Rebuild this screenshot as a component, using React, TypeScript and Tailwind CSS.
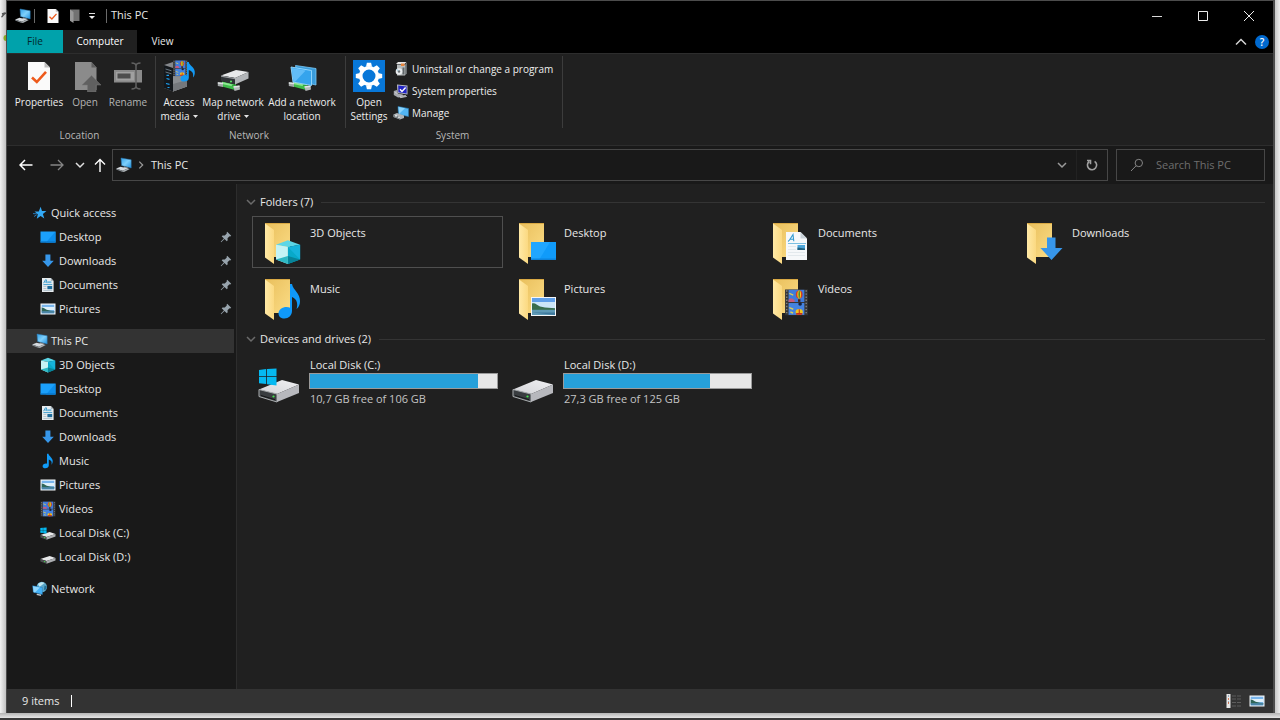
import React from "react";

type IconProps = { className?: string };

/* ---------- small icons (16 x 16 grid) ---------- */

function PcIcon({ className = "h-4 w-4" }: IconProps) {
  return (
    <svg viewBox="0 0 16 16" className={className} aria-hidden="true">
      <defs>
        <linearGradient id="pc" x1="0" y1="0" x2="1" y2="1">
          <stop offset="0" stopColor="#2f9fe8" />
          <stop offset=".5" stopColor="#7fd0fb" />
          <stop offset="1" stopColor="#1d8fe0" />
        </linearGradient>
      </defs>
      <path d="M5 1 15.200 2.800v8.200L5.600 8.600z" fill="url(#pc)" stroke="#2a75ad" strokeWidth=".5" />
      <path d="M8 9.600l4 1-.5 1.400-4-1z" fill="#8e9396" />
      <path d="M.2 11.500 4.600 9.800l7.400 1.800L6.500 13.800z" fill="#d5dade" />
      <path d="M.2 11.500 6.500 13.800v1.200L.2 12.500z" fill="#848b90" />
      <path d="M6.500 13.800 12 11.600l1.800.5L8.500 14.800l-2 .2z" fill="#aab0b4" />
    </svg>
  );
}

function StarIcon({ className = "h-4 w-4" }: IconProps) {
  return (
    <svg viewBox="0 0 16 16" className={className} aria-hidden="true">
      <path
        d="M8.600 1.800 10 6l4.400.1-3.500 2.800 1.400 4.600-3.700-2.500-3.800 2.700 1-4.500L2.500 6.600l4.300-.2z"
        fill="#33a9f4"
      />
      <path d="M1 8.600l4 .2M2 11.500l2.600-1.600" stroke="#2677b5" strokeWidth="1" />
    </svg>
  );
}

function DesktopIcon({ className = "h-4 w-4" }: IconProps) {
  return (
    <svg viewBox="0 0 16 16" className={className} aria-hidden="true">
      <rect x=".5" y="2.500" width="15" height="11" fill="#1ba0fb" />
      <path d="M15.500 2.500v11H6z" fill="#0c8deb" />
      <rect x=".5" y="12.300" width="15" height="1.200" fill="#0877cb" />
    </svg>
  );
}

function DownIcon({ className = "h-4 w-4" }: IconProps) {
  return (
    <svg viewBox="0 0 16 16" className={className} aria-hidden="true">
      <path d="M5.400 1.500h5v6.300h3.400L8 14 2.200 7.800h3.200z" fill="#3797ea" />
    </svg>
  );
}

function DocIcon({ className = "h-4 w-4" }: IconProps) {
  return (
    <svg viewBox="0 0 16 16" className={className} aria-hidden="true">
      <path d="M2 1h8.800L13.600 4v11H2z" fill="#e6ebee" />
      <path d="M10.800 1 13.600 4h-2.800z" fill="#aab7c0" />
      <path d="M3.600 6.200 5.400 2.800h1l.6 3.400M4.600 5h2" stroke="#3096cc" fill="none" strokeWidth=".9" />
      <path d="M3.400 7.600h8.800" stroke="#3096cc" strokeWidth=".9" />
      <rect x="7.400" y="4.300" width="4" height="1.800" fill="#6db7dd" />
      <rect x="7.400" y="9" width="4.800" height="3.200" fill="#1e6c9c" />
      <path d="M3.400 9.500h3M3.400 11.500h3M3.400 13.500h8.800" stroke="#a9bcc8" strokeWidth=".8" />
    </svg>
  );
}

function PictureIcon({ className = "h-4 w-4" }: IconProps) {
  return (
    <svg viewBox="0 0 16 16" className={className} aria-hidden="true">
      <rect x=".5" y="2.500" width="15" height="11" fill="#f4f7f9" />
      <rect x="1.700" y="3.700" width="12.600" height="8.600" fill="#79b5ec" />
      <path d="M1.700 6h12.600v3H1.700z" fill="#dff0fa" />
      <path d="M1.700 6.600c2 0 3 1.400 5 2.200l4 .9 3.600.3v.7H1.700z" fill="#2f6658" />
      <rect x="1.700" y="10.300" width="12.600" height="2" fill="#4a86a8" />
    </svg>
  );
}

function PinIcon() {
  return (
    <svg viewBox="0 0 12 12" className="h-3 w-3 shrink-0" aria-hidden="true">
      <path
        d="M7.200.8 11.200 4.800l-1 .6-.7-.2-2 2 .2 2.100-.9.9L4.500 8 1.200 11.200.7 10.800 3.900 7.500 1.700 5.300l.9-.9 2.200.2 2-2-.2-.9z"
        fill="#98a4ad"
      />
    </svg>
  );
}

function CubeShape() {
  return (
    <>
      <path d="M1 3.600 8 .8l7.200 2.800L8 5z" fill="#5cd6e6" />
      <path d="M1 3.600 8 5v10.400l-7-2.800z" fill="#c4f3f5" />
      <path d="M8 5l7.200-1.400v9L8 15.400z" fill="#08a9c9" />
      <path d="M8 10.500l7.200 2.100L8 15.400z" fill="#078499" />
      <path d="M1 12.600 8 10.500v4.900z" fill="#2eb9c4" />
      <path d="M8 5l7.200-1.400v9z" fill="#1bb8e2" opacity=".7" />
    </>
  );
}

function CubeIcon({ className = "h-4 w-4" }: IconProps) {
  return (
    <svg viewBox="0 0 16 16" className={className} aria-hidden="true">
      <CubeShape />
    </svg>
  );
}

function NoteIcon({ className = "h-4 w-4" }: IconProps) {
  return (
    <svg viewBox="0 0 16 16" className={className} aria-hidden="true">
      <path
        d="M7 .8h1.500c.2 2.600 4.800 4 4.200 8-.2 1.400-.7 2.300-1.200 2.900.5-2.600.2-4.200-2.700-5.300v6.200c0 1.600-1.500 2.700-3.400 2.700-1.600 0-2.800-.8-2.800-2.100 0-1.600 1.600-2.700 3.300-2.700.5 0 .8.100 1.100.2z"
        fill="#109bf8"
      />
    </svg>
  );
}

function FilmShape() {
  return (
    <>
      <rect x=".5" y=".5" width="15" height="15" fill="#353535" />
      <path d="M1.600 1v14M14.400 1v14" stroke="#858585" strokeWidth=".9" strokeDasharray=".8 1" />
      <rect x="2.800" y=".7" width="10.400" height="7.100" fill="#3f7bdc" />
      <rect x="2.800" y="8.400" width="10.400" height="6.900" fill="#4583e0" />
      <path d="M2.800 6.600c1.200-1.300 2.600-1 4 .2v1H2.800z" fill="#c65a7c" />
      <path d="M3.300 2.800l2.600 1M3.300 11l2.600 1M4 13.600l1.800.6" stroke="#d9cf5a" strokeWidth=".8" />
      <ellipse cx="9.800" cy="3.500" rx="2.200" ry="2.400" fill="#d33a26" />
      <ellipse cx="9.800" cy="3.500" rx="1.200" ry="2.400" fill="#f2cf20" />
      <ellipse cx="9.800" cy="3.500" rx=".4" ry="2.400" fill="#1f7a3a" />
      <path d="M9 6.200h1.600v1.500H9z" fill="#4a2416" />
      <ellipse cx="10.400" cy="9" rx="1.200" ry=".9" fill="#14223f" />
      <ellipse cx="9.800" cy="13.600" rx="2.400" ry="1.700" fill="#f1c51b" />
      <path d="M7.800 14.200h4v1h-4z" fill="#c42c22" />
      <path d="M9.500 12h.7v3h-.7z" fill="#c42c22" />
    </>
  );
}

function FilmIcon({ className = "h-4 w-4" }: IconProps) {
  return (
    <svg viewBox="0 0 16 16" className={className} aria-hidden="true">
      <FilmShape />
    </svg>
  );
}

function WinLogo({ x, y, s }: { x: number; y: number; s: number }) {
  return (
    <g transform={`translate(${x} ${y}) scale(${s})`} fill="#05b9f1">
      <path d="M0 1.500 7.200.6v7.100H0zM8 .5 17.500 0v7.700H8zM0 8.500h7.200v7.100L0 14.800zM8 8.500h9.500v8.500L8 15.800z" />
    </g>
  );
}

function SmallDriveIcon({ windows = false }: { windows?: boolean }) {
  return (
    <svg viewBox="0 0 16 16" className="h-4 w-4" aria-hidden="true">
      <path d="M.4 10 9.600 7l5.900 2L6.500 12z" fill="#e8e9ea" />
      <path d="M.4 10 6.500 12v2.800L.4 12.600z" fill="#4b4e50" />
      <path d="M6.500 12l9-3v2.500l-9 3.300z" fill="#abadb0" />
      <circle cx="4.600" cy="12.600" r=".7" fill="#41dd4a" />
      {windows && <WinLogo x={0.3} y={2.5} s={0.36} />}
    </svg>
  );
}

function NetworkIcon() {
  return (
    <svg viewBox="0 0 16 16" className="h-4 w-4" aria-hidden="true">
      <circle cx="9.800" cy="6" r="5.200" fill="#5aa7c8" />
      <path d="M6 3c2-2 5-2.400 6.500-1L10 4 7.500 6z" fill="#c2e8f2" />
      <path d="M12.500 4.500l2.400 1-1 3-2 .5z" fill="#256f94" />
      <path d="M.6 4.800 10.400 6.500v7L1.400 11.200z" fill="#43b1f7" stroke="#2b7bb4" strokeWidth=".5" />
      <path d="M1 5.200l7 1.200L3 11.400l-1.400-.5z" fill="#8ed6fd" />
      <path d="M5 12.800l4 .8v1.300l-4.500-.9z" fill="#bfc5ca" />
    </svg>
  );
}

/* ---------- title bar icons ---------- */

function SheetCheckIcon({ className }: IconProps) {
  return (
    <svg viewBox="0 0 22 28" className={className} aria-hidden="true">
      <path d="M0 0h16.500L22 5.500V28H0z" fill="#fafafa" />
      <path d="M16.500 0 22 5.500h-5.500z" fill="#bdbdbd" />
      <path d="M4 15.500 8.800 20 18 9.800" fill="none" stroke="#ee5a1b" strokeWidth="2.600" />
    </svg>
  );
}

/* ---------- ribbon icons ---------- */

function OpenIcon() {
  return (
    <svg viewBox="0 0 32 32" className="h-8 w-8" aria-hidden="true">
      <path d="M6 2h16.500L27.500 7.500V30H6z" fill="#8b8b8b" />
      <path d="M22.500 2 27.500 7.500h-5z" fill="#5e5e5e" />
      <path d="M22.500 15.500 32 25h-5v7h-8.500v-7H13z" fill="#606060" stroke="#777" strokeWidth=".5" />
    </svg>
  );
}

function RenameIcon() {
  return (
    <svg viewBox="0 0 32 32" className="h-8 w-8" aria-hidden="true">
      <rect x="2" y="10" width="28" height="12.500" fill="#8a8a8a" />
      <rect x="4" y="12" width="18" height="8.500" fill="#a0a0a0" />
      <rect x="5.500" y="13.500" width="13" height="5" fill="#4d4d4d" />
      <path
        d="M19.500 3c3 0 4.500.8 4.500 3v20c0 2.200-1.500 3-4.500 3M28.500 3c-3 0-4.500.8-4.500 3M28.500 29c-3 0-4.500-.8-4.500-3"
        fill="none"
        stroke="#606060"
        strokeWidth="1.500"
      />
    </svg>
  );
}

function AccessMediaIcon() {
  return (
    <svg viewBox="0 0 34 32" className="h-8 w-[34px]" aria-hidden="true">
      <path d="M2 5 11 2l14 3v21.500L11 31.500 2 28z" fill="#85888c" />
      <path d="M2 5l9 3v23.500L2 28z" fill="#14181c" />
      <path d="M11 8l14-3v21.500l-14 5z" fill="#8b8e92" />
      <path d="M11 24l14-4v6.500l-14 5z" fill="#75787c" />
      <path d="M3.500 9l6 1.800M3.500 12l6 1.800" stroke="#6b7780" strokeWidth="1" />
      <path d="M4.500 15.300h2.500M4.500 18.500l3 .8M4 23.500l3.500.8M5.500 27.500h2" stroke="#1c9ff0" strokeWidth="1.200" />
      <g transform="translate(10.500 -.2) scale(.98 1.050)">
        <FilmShape />
      </g>
      <path
        d="M25 2h1.800c.5 4 6.700 5 6 11.500-.3 2-.9 3.200-1.800 4 .6-4-.2-6-4.200-7.500v8c0 2.400-2.200 3.600-4.600 3.600-2.300 0-3.700-1-3.700-2.900 0-2.300 2.200-3.700 4.600-3.700.8 0 1.400.1 1.900.4z"
        fill="#139af5"
      />
    </svg>
  );
}

function PipeShape() {
  return (
    <>
      <path d="M5 21.500l13 3v5.500L5 26.500z" fill="#3fbd4b" />
      <path d="M5 22l13 3v1.800L5 24z" fill="#8fe693" />
      <path d="M14.500 25l4-1.500 1.500 4-2 2.500z" fill="#31a83c" />
      <path d="M.8 22.300l5.200.4v4.200l-5.200-.8z" fill="#a3a8a9" />
      <path d="M.8 22.300l5.200.4v1.600l-5.200-.6z" fill="#dde1e1" />
      <path d="M16.500 26.300l6-.8.5 4-5.500 1.500z" fill="#b5babb" />
      <path d="M16.500 26.300l6-.8v1.400l-6 .9z" fill="#e1e4e4" />
    </>
  );
}

function MapDriveIcon() {
  return (
    <svg viewBox="0 0 32 32" className="h-8 w-8" aria-hidden="true">
      <PipeShape />
      <path d="M4 15.500 19 10l12.500 2L18 18z" fill="#e8e9ea" />
      <path d="M4 15.500 18 18v6.500L4 20.800z" fill="#303437" />
      <path d="M4 15.500 18 18v1.300L4 16.800z" fill="#9a9da0" />
      <path d="M18 18l13.500-6v6.500l-13.500 6z" fill="#b2b5b8" />
      <circle cx="14" cy="21.500" r="1" fill="#5ff268" />
    </svg>
  );
}

function NetLocationIcon() {
  return (
    <svg viewBox="0 0 32 32" className="h-8 w-8" aria-hidden="true">
      <path d="M9.500 5.500l20.500 3V25L12 21z" fill="#3a9cdb" stroke="#79c8f6" strokeWidth=".8" />
      <g transform="translate(2 0)">
        <PipeShape />
      </g>
      <path d="M5 7l20.500 3.500V25.500L7 22z" fill="#35a4ed" stroke="#98daff" strokeWidth=".9" />
      <path d="M5.700 7.900l14 2.500L9 21.800l-1.500-.3z" fill="#62bdf8" />
    </svg>
  );
}

const TEETH = [0, 45, 90, 135, 180, 225, 270, 315];

function SettingsIcon() {
  return (
    <svg viewBox="0 0 32 32" className="h-8 w-8" aria-hidden="true">
      <rect width="32" height="32" fill="#0877d8" />
      <circle cx="16" cy="16" r="8.300" fill="none" stroke="#fff" strokeWidth="3.600" />
      {TEETH.map((angle) => (
        <path key={angle} d="M13.900 2.800h4.200l.9 4h-6z" fill="#fff" transform={`rotate(${angle} 16 16)`} />
      ))}
    </svg>
  );
}

function UninstallIcon() {
  return (
    <svg viewBox="0 0 16 16" className="h-4 w-4" aria-hidden="true">
      <path d="M4 3.500h8v11H4z" fill="#b8bcbd" />
      <path d="M3 3 5 1h8.500l-2 2z" fill="#e4e4e4" />
      <path d="M12 3.500l1.800-2v11l-1.800 2z" fill="#7c8183" />
      <path d="M8 2.500h3.500v2.500H8z" fill="#e8843a" />
      <path d="M9.500 6.500h2v7h-2z" fill="#606668" />
      <circle cx="6" cy="10.500" r="3.300" fill="#e9ecee" />
      <circle cx="6" cy="10.500" r="1.200" fill="#6d7375" />
      <path d="M3.500 8.500l2 1.200" stroke="#90c4d8" strokeWidth="1" />
    </svg>
  );
}

function SystemPropsIcon() {
  return (
    <svg viewBox="0 0 16 16" className="h-4 w-4" aria-hidden="true">
      <path d="M4 1.500 14.500 2.500v9L4.500 10z" fill="#b9bbc4" />
      <path d="M5.200 2.600l8.400.9v7l-8.200-1.300z" fill="#2224c4" />
      <path d="M7 6.300l2 2.200 3.600-4" stroke="#fff" strokeWidth="1.400" fill="none" />
      <path d="M.8 8l3.200-1 .8 3.600 5 1v2.400L5 14.500.8 12z" fill="#a5a8ae" />
      <path d="M2 9.500l2.500 1M7 13.300l5.500-.8 1 1-6 1.200z" stroke="#dcdde0" strokeWidth=".7" fill="#8f9298" />
    </svg>
  );
}

function ManageIcon() {
  return (
    <svg viewBox="0 0 16 16" className="h-4 w-4" aria-hidden="true">
      <path d="M5 1.500 15.500 3.500v8L5.500 9.500z" fill="#52b5f3" stroke="#2c78ad" strokeWidth=".6" />
      <path d="M5.500 2 12 3.200 6 9z" fill="#8ad3fb" />
      <path d="M.5 9.500 4 8l7 2.500V13l-4 1.500L.5 12z" fill="#aeb4b8" />
      <path d="M.5 9.500 7 12v2.500L.5 12z" fill="#7b8286" />
      <circle cx="3" cy="10.800" r="1" fill="#e4e7e9" />
      <circle cx="6" cy="12.300" r=".9" fill="#e4e7e9" />
    </svg>
  );
}

/* ---------- large tile icons (48 x 48 grid) ---------- */

function FolderIcon({ children }: { children: React.ReactNode }) {
  return (
    <svg viewBox="0 0 48 48" className="h-12 w-12 shrink-0" aria-hidden="true">
      <defs>
        <linearGradient id="fb" x1="0" y1="0" x2="1" y2="1">
          <stop offset="0" stopColor="#e9bf5c" />
          <stop offset="1" stopColor="#fbdc85" />
        </linearGradient>
        <linearGradient id="ff" x1="0" y1="0" x2="1" y2="0">
          <stop offset="0" stopColor="#ffe9a6" />
          <stop offset="1" stopColor="#fbd981" />
        </linearGradient>
      </defs>
      <path d="M7 6h25v34H7z" fill="url(#fb)" />
      <path d="M7 6h25v1H7z" fill="#d9a944" />
      <path d="M7 6.500 16 13v34l-9-6.500z" fill="url(#ff)" />
      {children}
    </svg>
  );
}

function LargeCube() {
  return (
    <g transform="translate(16.300 22) scale(1.700 1.620)">
      <CubeShape />
    </g>
  );
}

function LargeDesktop() {
  return (
    <>
      <rect x="19" y="25" width="25" height="18" fill="#109bfa" />
      <path d="M19 25h19L27 43h-8z" fill="#20a6ff" />
      <rect x="19" y="41.500" width="25" height="1.500" fill="#0c83dc" />
    </>
  );
}

function LargeDocument() {
  return (
    <g transform="translate(0 1)">
      <path d="M20 14h14.500L41 20.500V42H20z" fill="#f6f8fa" />
      <path d="M34.500 14 41 20.500h-6.500z" fill="#c9d2d9" />
      <path d="M22 23.500c2-1 3.500-5 5-7l.8 6.800M23.500 21.300h4.500" stroke="#349bcf" strokeWidth="1.100" fill="none" />
      <path d="M22 25.500h18" stroke="#7cc0e2" strokeWidth="1" />
      <path d="M22 28.500h8M22 31.500h8M22 34.500h17M22 37.500h17" stroke="#e3e9ed" strokeWidth="1" />
      <rect x="31.500" y="27" width="7.500" height="5" fill="#4ba4d8" />
      <path d="M31.500 29.500c3 0 4 1 7.500 1v1.500h-7.500z" fill="#23617f" />
    </g>
  );
}

function LargeDownload() {
  return <path d="M27 20.500h8.500V31H42.500L31.500 43 20.500 31H27z" fill="#3796ea" />;
}

function LargeNote() {
  return (
    <path
      d="M32 11h2c1 6 8.500 9.500 8 17.500-.1 3.500-1.500 6-3.500 7.500C40 32 39.500 26 34 24v14c0 4.500-3.500 7.500-7.500 7.500-3.500 0-6-2-6-5 0-4 4-6.500 8-6.500 1.500 0 2.700.3 3.500.8z"
      fill="#0f99fa"
    />
  );
}

function LargePicture() {
  return (
    <g transform="translate(0 1)">
      <rect x="19" y="23" width="25" height="19" fill="#f5f7f9" />
      <rect x="20" y="24" width="23" height="17" fill="#5f9fe9" />
      <path d="M20 28h23v6.500H20z" fill="#cbe5f7" />
      <path d="M20 29.500c3-1 5 1.500 8 3l5 1 10 .8v1.700H20z" fill="#396d4d" />
      <rect x="20" y="35.800" width="23" height="5.200" fill="#5f9ab6" />
      <path d="M20 38.500h23V41z" fill="#3e789c" />
    </g>
  );
}

function LargeFilm() {
  return (
    <g transform="translate(18.300 15.600) scale(1.520 1.720)">
      <FilmShape />
    </g>
  );
}

function DriveIcon({ windows = false }: { windows?: boolean }) {
  return (
    <svg viewBox="0 0 48 48" className="h-12 w-12 shrink-0" aria-hidden="true">
      <defs>
        <linearGradient id="dt" x1="0" y1="1" x2="1" y2="0">
          <stop offset="0" stopColor="#d3d4d8" />
          <stop offset="1" stopColor="#f0f0f2" />
        </linearGradient>
      </defs>
      <path d="M3 28.500 26 19l17 4.500L21 33z" fill="url(#dt)" />
      <path d="M3 28.500 21 33v8L3 35.500z" fill="#393d40" stroke="#aaaeb0" strokeWidth="1" />
      <path d="M21 33l22-9.500V32L21 41z" fill="#b7b8bd" />
      <path d="M5 34.500l14 4.200" stroke="#151718" strokeWidth="1" />
      <circle cx="17.500" cy="35.500" r="1.100" fill="#46e64e" />
      {windows && <WinLogo x={3} y={7.5} s={1} />}
    </svg>
  );
}

/* ---------- line icons ---------- */

function Chevron({ d, className }: { d: string; className: string }) {
  return (
    <svg viewBox="0 0 12 12" className={className} fill="none" stroke="currentColor" aria-hidden="true">
      <path d={d} strokeWidth="1.500" />
    </svg>
  );
}

const CHEVRON_DOWN = "M2 4l4 4 4-4";
const CHEVRON_UP = "M1 8.500l5-5 5 5";
const CHEVRON_RIGHT = "M4 2l4 4-4 4";

function Caret() {
  return (
    <svg viewBox="0 0 5 3" className="mb-0.5 ml-[3px] inline-block h-[3px] w-[5px] align-middle" aria-hidden="true">
      <path d="M0 0h5L2.500 3z" fill="#e5e5e5" />
    </svg>
  );
}

/* ---------- data ---------- */

type NavEntry = { label: string; icon: React.ReactNode; pinned?: boolean };

const QUICK: NavEntry[] = [
  { label: "Desktop", icon: <DesktopIcon />, pinned: true },
  { label: "Downloads", icon: <DownIcon />, pinned: true },
  { label: "Documents", icon: <DocIcon />, pinned: true },
  { label: "Pictures", icon: <PictureIcon />, pinned: true },
];

const PC: NavEntry[] = [
  { label: "3D Objects", icon: <CubeIcon /> },
  { label: "Desktop", icon: <DesktopIcon /> },
  { label: "Documents", icon: <DocIcon /> },
  { label: "Downloads", icon: <DownIcon /> },
  { label: "Music", icon: <NoteIcon /> },
  { label: "Pictures", icon: <PictureIcon /> },
  { label: "Videos", icon: <FilmIcon /> },
  { label: "Local Disk (C:)", icon: <SmallDriveIcon windows /> },
  { label: "Local Disk (D:)", icon: <SmallDriveIcon /> },
];

const FOLDERS = [
  { label: "3D Objects", art: <LargeCube /> },
  { label: "Desktop", art: <LargeDesktop /> },
  { label: "Documents", art: <LargeDocument /> },
  { label: "Downloads", art: <LargeDownload /> },
  { label: "Music", art: <LargeNote /> },
  { label: "Pictures", art: <LargePicture /> },
  { label: "Videos", art: <LargeFilm /> },
];

const DRIVES = [
  { label: "Local Disk (C:)", free: "10,7 GB free of 106 GB", used: 90, windows: true },
  { label: "Local Disk (D:)", free: "27,3 GB free of 125 GB", used: 78, windows: false },
];

/* ---------- pieces ---------- */

function RibbonButton({
  icon,
  lines,
  width,
  caret = false,
  muted = false,
}: {
  icon: React.ReactNode;
  lines: string[];
  width: string;
  caret?: boolean;
  muted?: boolean;
}) {
  return (
    <button
      type="button"
      className={`flex flex-col items-center gap-[3px] whitespace-nowrap ${width} ${muted ? "text-[#b4b4b4]" : "text-[#eeeeee]"}`}
    >
      {icon}
      <span className="leading-[14px]">
        {lines.map((line, i) => (
          <span key={line} className="block">
            {line}
            {caret && i === lines.length - 1 && <Caret />}
          </span>
        ))}
      </span>
    </button>
  );
}

function RibbonGroup({ label, width, children }: { label: string; width: string; children: React.ReactNode }) {
  return (
    <section className={`flex shrink-0 flex-col justify-between ${width}`}>
      <div className="flex h-[73px] border-r border-[#3c3c3c] pt-1">{children}</div>
      <h2 className="pr-1 text-center leading-[14px] text-[#b8b8b8]">{label}</h2>
    </section>
  );
}

function RibbonLink({ icon, label }: { icon: React.ReactNode; label: string }) {
  return (
    <button type="button" className="flex h-[22px] items-center gap-[3px]">
      {icon}
      {label}
    </button>
  );
}

function NavRoot({ label, icon, active = false }: NavEntry & { active?: boolean }) {
  return (
    <a
      href="#"
      className={`mr-[2px] flex h-6 items-center gap-[3px] pl-[25px] ${active ? "bg-[#333333]" : ""}`}
    >
      {icon}
      {label}
    </a>
  );
}

function NavItem({ label, icon, pinned }: NavEntry) {
  return (
    <a href="#" className="flex h-6 items-center gap-[3px] pr-1 pl-[33px]">
      {icon}
      <span className="grow">{label}</span>
      {pinned && <PinIcon />}
    </a>
  );
}

function SectionHeader({ label }: { label: string }) {
  return (
    <div className="flex h-5 items-center pr-2 pl-2">
      <Chevron d={CHEVRON_DOWN} className="h-3 w-3 text-[#6b6b6b]" />
      <h2 className="ml-[3px]">{label}</h2>
      <div className="ml-2 h-px grow bg-[#343434]" />
    </div>
  );
}

export default function App() {
  return (
    <div className="flex min-h-screen flex-col bg-[linear-gradient(90deg,#f2f2f2,#b9b9b9_7px,#b9b9b9_calc(100%-7px),#ececec)] pt-px font-['Open_Sans','Noto_Sans',sans-serif] text-[11px] text-[#e8e8e8]">
      <div className="flex grow">
        <div className="w-[7px] shrink-0 pt-2">
          <svg viewBox="0 0 7 36" className="h-9 w-[7px]" aria-hidden="true">
            <path d="M1.500 8c2-1 2-4 5-4M2 5l3-1" stroke="#555" strokeWidth="1.500" fill="none" />
            <ellipse cx="6" cy="29" rx="2.500" ry="3" fill="#86a723" />
          </svg>
        </div>
        <div className="flex min-w-0 grow flex-col border-r border-[#4c4c4c] bg-[#202020] shadow-[0_0_0_1px_#4c4c4c]">
          <header className="bg-black pr-px">
            <div className="flex h-[29px] items-center">
              <div className="flex grow items-center pl-2">
                <PcIcon />
                <span className="ml-[3px] h-3.5 w-px bg-[#6a6a6a]" />
                <button type="button" aria-label="Properties" className="ml-3">
                  <SheetCheckIcon className="h-3.5 w-3" />
                </button>
                <button type="button" aria-label="New folder" className="ml-2.5">
                  <svg viewBox="0 0 12 16" className="h-4 w-3" aria-hidden="true">
                    <path d="M1 1.500h9.500V13H1z" fill="#727272" />
                    <path d="M1 1.500 4.500 4v11L1 12.800z" fill="#999" />
                  </svg>
                </button>
                <button type="button" aria-label="Customize toolbar" className="ml-[7px]">
                  <svg viewBox="0 0 8 8" className="h-2 w-2" aria-hidden="true">
                    <path d="M1 1.500h6" stroke="#ddd" />
                    <path d="M1 4h6L4 7z" fill="#eee" />
                  </svg>
                </button>
                <span className="ml-2.5 h-3.5 w-px bg-[#6a6a6a]" />
                <h1 className="ml-1">This PC</h1>
              </div>
              <button type="button" aria-label="Minimize" className="flex h-full w-[46px] items-center justify-center">
                <svg viewBox="0 0 12 12" className="h-3 w-3" stroke="#d8d8d8" aria-hidden="true">
                  <path d="M1 6.500h10" />
                </svg>
              </button>
              <button type="button" aria-label="Maximize" className="flex h-full w-[46px] items-center justify-center">
                <svg viewBox="0 0 12 12" className="h-3 w-3" fill="none" stroke="#ececec" aria-hidden="true">
                  <path d="M1.500 1.500h9v9h-9z" />
                </svg>
              </button>
              <button type="button" aria-label="Close" className="flex h-full w-[46px] items-center justify-center">
                <svg viewBox="0 0 12 12" className="h-3 w-3" stroke="#ececec" aria-hidden="true">
                  <path d="M1 1l10 10M11 1 1 11" />
                </svg>
              </button>
            </div>
            <div className="flex h-[23px] items-center text-[10px]">
              <button type="button" className="h-full w-14 bg-[#00a2ab] text-[#02282b]">
                File
              </button>
              <button type="button" className="h-full w-[74px] bg-[#202020] text-white">
                Computer
              </button>
              <button type="button" className="h-full w-[51px]">
                View
              </button>
              <span className="grow" />
              <button type="button" aria-label="Collapse the ribbon" className="mr-2">
                <Chevron d={CHEVRON_UP} className="h-3 w-3 text-[#d4d4d4]" />
              </button>
              <button
                type="button"
                aria-label="Help"
                className="mr-[3px] h-3.5 w-3.5 rounded-full bg-[#0069cf] text-[10px] leading-[14px] font-semibold text-white"
              >
                ?
              </button>
            </div>
          </header>

          <div className="flex h-[93px] border-t border-b border-[#2d2d2d] pt-[2px] pb-[3px] text-[10px]">
            <RibbonGroup label="Location" width="w-[149px]">
              <div className="flex pl-1">
                <RibbonButton
                  icon={
                    <span className="flex h-8 items-center">
                      <SheetCheckIcon className="h-7 w-[22px]" />
                    </span>
                  }
                  lines={["Properties"]}
                  width="w-14"
                />
                <RibbonButton icon={<OpenIcon />} lines={["Open"]} width="w-9" muted />
                <RibbonButton icon={<RenameIcon />} lines={["Rename"]} width="w-[50px]" muted />
              </div>
            </RibbonGroup>
            <RibbonGroup label="Network" width="w-[190px]">
              <div className="flex pl-0.5">
                <RibbonButton icon={<AccessMediaIcon />} lines={["Access", "media"]} width="w-[42px]" caret />
                <RibbonButton icon={<MapDriveIcon />} lines={["Map network", "drive"]} width="w-[66px]" caret />
                <RibbonButton icon={<NetLocationIcon />} lines={["Add a network", "location"]} width="w-[72px]" />
              </div>
            </RibbonGroup>
            <RibbonGroup label="System" width="w-[217px]">
              <div className="flex items-start pl-[3px]">
                <RibbonButton icon={<SettingsIcon />} lines={["Open", "Settings"]} width="w-10" />
                <div className="-mt-0.5 ml-1 flex flex-col text-[#eeeeee]">
                  <RibbonLink icon={<UninstallIcon />} label="Uninstall or change a program" />
                  <RibbonLink icon={<SystemPropsIcon />} label="System properties" />
                  <RibbonLink icon={<ManageIcon />} label="Manage" />
                </div>
              </div>
            </RibbonGroup>
          </div>

          <div className="flex h-[38px] items-center bg-[#191919] pr-2">
            <div className="flex w-[105px] shrink-0 items-center pl-3">
              <button type="button" aria-label="Back">
                <svg viewBox="0 0 14 14" className="h-3.5 w-3.5" fill="none" stroke="#fff" strokeWidth="1.500" aria-hidden="true">
                  <path d="M13.500 7H1M6 2 1 7l5 5" />
                </svg>
              </button>
              <button type="button" aria-label="Forward" className="ml-[17px]">
                <svg viewBox="0 0 14 14" className="h-3.5 w-3.5" fill="none" stroke="#858585" strokeWidth="1.300" aria-hidden="true">
                  <path d="M.5 7H13M8 2l5 5-5 5" />
                </svg>
              </button>
              <button type="button" aria-label="Recent locations" className="ml-2.5">
                <Chevron d={CHEVRON_DOWN} className="h-3 w-3 text-[#e0e0e0]" />
              </button>
              <button type="button" aria-label="Up" className="ml-[7px]">
                <svg viewBox="0 0 14 14" className="h-3.5 w-3.5" fill="none" stroke="#fff" strokeWidth="1.400" aria-hidden="true">
                  <path d="M7 14V1.500M2 6.500l5-5 5 5" />
                </svg>
              </button>
            </div>
            <div className="flex h-8 grow items-center border border-[#474747] pl-[3px]">
              <PcIcon />
              <Chevron d={CHEVRON_RIGHT} className="ml-1 h-2.5 w-2.5 text-[#9a9a9a]" />
              <a href="#" className="ml-[5px] grow">
                This PC
              </a>
              <button type="button" aria-label="Previous locations" className="mr-2">
                <Chevron d={CHEVRON_DOWN} className="h-3 w-3 text-[#9a9a9a]" />
              </button>
              <div className="flex h-full w-[31px] items-center justify-center border-l border-[#222222]">
                <button type="button" aria-label="Refresh">
                  <svg viewBox="0 0 12 12" className="h-3 w-3" fill="none" stroke="#a0a0a0" strokeWidth="1.600" aria-hidden="true">
                    <path d="M8.600 2.300A4.600 4.600 0 1 1 3.200 2.500M1 1.500h3.500v3.700" />
                  </svg>
                </button>
              </div>
            </div>
            <label className="ml-2 flex h-8 w-[149px] shrink-0 items-center border border-[#474747] pl-[13px]">
              <svg viewBox="0 0 14 14" className="h-3.5 w-3.5 shrink-0" fill="none" stroke="#858585" aria-hidden="true">
                <circle cx="8.800" cy="5" r="3.700" />
                <path d="M6.200 7.700 1 13" />
              </svg>
              <input
                type="search"
                aria-label="Search This PC"
                placeholder="Search This PC"
                className="ml-3 w-full min-w-0 bg-transparent outline-none placeholder:text-[#6e6e6e]"
              />
            </label>
          </div>

          <div className="flex grow">
            <nav className="w-[230px] shrink-0 border-r border-[#2d2d2d] bg-[#191919] pt-[17px]">
              <NavRoot label="Quick access" icon={<StarIcon />} />
              {QUICK.map((entry) => (
                <NavItem key={entry.label} {...entry} />
              ))}
              <div className="mt-2">
                <NavRoot label="This PC" icon={<PcIcon />} active />
                {PC.map((entry) => (
                  <NavItem key={entry.label} {...entry} />
                ))}
              </div>
              <div className="mt-2">
                <NavRoot label="Network" icon={<NetworkIcon />} />
              </div>
            </nav>

            <main className="grow pt-2">
              <SectionHeader label="Folders (7)" />
              <div className="mt-1 grid grid-cols-[repeat(auto-fill,254px)] gap-y-1 pl-[15px]">
                {FOLDERS.map((folder, i) => (
                  <button
                    key={folder.label}
                    type="button"
                    className={`flex h-[52px] w-[251px] items-start border pl-[5px] text-left ${
                      i === 0 ? "border-[#4f4f4f]" : "border-transparent"
                    }`}
                  >
                    <FolderIcon>{folder.art}</FolderIcon>
                    <span className="ml-1 pt-2">{folder.label}</span>
                  </button>
                ))}
              </div>
              <div className="mt-[5px]">
                <SectionHeader label="Devices and drives (2)" />
              </div>
              <div className="mt-1 grid grid-cols-[repeat(auto-fill,254px)] pl-[15px]">
                {DRIVES.map((drive) => (
                  <button key={drive.label} type="button" className="flex w-[251px] items-start pl-1 text-left">
                    <span className="pt-2">
                      <DriveIcon windows={drive.windows} />
                    </span>
                    <span className="ml-[5px] grow pt-[3px] pr-[5px]">
                      <span className="block pl-px leading-[17px]">{drive.label}</span>
                      <span className="block h-4 border border-[#9a9a9a] bg-[#e6e6e6]">
                        <span className="block h-full bg-[#26a0da]" style={{ width: `${drive.used}%` }} />
                      </span>
                      <span className="block pt-0.5 pl-px leading-4 text-[#c4c4c4]">{drive.free}</span>
                    </span>
                  </button>
                ))}
              </div>
            </main>
          </div>

          <footer className="flex h-6 items-center bg-[#333333] pr-2 pl-[15px]">
            <span>9 items</span>
            <span className="ml-3 h-3 w-px bg-white" />
            <span className="grow" />
            <button type="button" aria-label="Details view">
              <svg viewBox="0 0 16 16" className="h-4 w-4" aria-hidden="true">
                <rect x=".5" y="1" width="4" height="14" fill="#e8e8e8" />
                <path d="M2 3h1M2 9h1" stroke="#3f6f9a" />
                <path d="M2 6h1M2 10h1" stroke="#d2572b" strokeWidth="1.500" />
                <path d="M6 3h4M11 3h4M6 6h4M11 6h4M6 9.500h4M11 9.500h4M6 13h4M11 13h4" stroke="#5d5d5d" />
              </svg>
            </button>
            <button type="button" aria-label="Large icons view" className="ml-[7px]">
              <PictureIcon />
            </button>
          </footer>
        </div>
        <div className="w-1.5 shrink-0" />
      </div>
      <div className="h-[5px] bg-[linear-gradient(#b5b5b5,#e6e6e6)]" />
      <div className="h-0.5 bg-[#3a3a3a]" />
    </div>
  );
}
